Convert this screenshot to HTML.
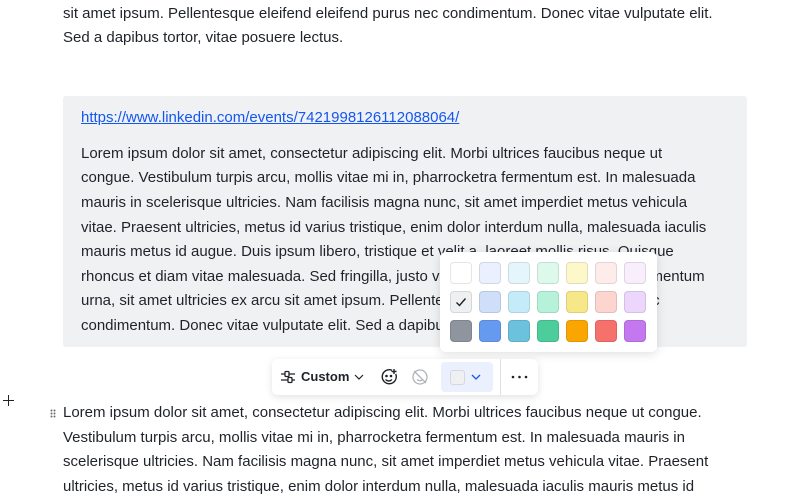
<!DOCTYPE html>
<html><head><meta charset="utf-8"><style>
*{margin:0;padding:0;box-sizing:border-box}
body{width:800px;height:488px;overflow:hidden;background:#fff;font-family:"Liberation Sans",sans-serif;font-size:15px;color:#1f2329;position:relative}
.l{position:absolute;left:63px;white-space:nowrap;line-height:20px}
.box{position:absolute;left:63px;top:96px;width:684px;height:251px;background:#f0f1f3;border-radius:3px}
a{color:#1456f0;text-decoration:underline}
.pop{position:absolute;left:440px;top:252px;width:217px;height:100px;background:#fff;border-radius:6px;box-shadow:0 2px 10px rgba(0,0,0,.13)}
.sw{position:absolute;width:22px;height:22px;border-radius:4px;border:1px solid rgba(0,0,0,.1)}
.tb{position:absolute;left:272px;top:359px;width:266px;height:36px;background:#fff;border-radius:6px;box-shadow:0 2px 8px rgba(0,0,0,.12)}
</style></head><body>
<div class="l" style="top:4px">sit amet ipsum. Pellentesque eleifend eleifend purus nec condimentum. Donec vitae vulputate elit.</div>
<div class="l" style="top:28px">Sed a dapibus tortor, vitae posuere lectus.</div>
<div class="box"></div>
<div class="l" style="left:81px;top:108px"><a>https://www.linkedin.com/events/7421998126112088064/</a></div>
<div class="l" style="left:81px;top:144px">Lorem ipsum dolor sit amet, consectetur adipiscing elit. Morbi ultrices faucibus neque ut</div>
<div class="l" style="left:81px;top:168px">congue. Vestibulum turpis arcu, mollis vitae mi in, pharrocketra fermentum est. In malesuada</div>
<div class="l" style="left:81px;top:193px">mauris in scelerisque ultricies. Nam facilisis magna nunc, sit amet imperdiet metus vehicula</div>
<div class="l" style="left:81px;top:218px">vitae. Praesent ultricies, metus id varius tristique, enim dolor interdum nulla, malesuada iaculis</div>
<div class="l" style="left:81px;top:242px">mauris metus id augue. Duis ipsum libero, tristique et velit a, laoreet mollis risus. Quisque</div>
<div class="l" style="left:81px;top:267px">rhoncus et diam vitae malesuada. Sed fringilla, justo vel fermentum volutpat, turpis fermentum</div>
<div class="l" style="left:81px;top:291px">urna, sit amet ultricies ex arcu sit amet ipsum. Pellentesque eleifend eleifend purus nec</div>
<div class="l" style="left:81px;top:316px">condimentum. Donec vitae vulputate elit. Sed a dapibus tortor, vitae posuere lectus.</div>

<div class="pop">
<div class="sw" style="left:10px;top:10px;background:#fff"></div>
<div class="sw" style="left:39px;top:10px;background:#eaf0fd"></div>
<div class="sw" style="left:68px;top:10px;background:#e4f6fb"></div>
<div class="sw" style="left:97px;top:10px;background:#dcf9ec"></div>
<div class="sw" style="left:126px;top:10px;background:#fdf8c9"></div>
<div class="sw" style="left:155px;top:10px;background:#feeceb"></div>
<div class="sw" style="left:184px;top:10px;background:#f8eefc"></div>
<div class="sw" style="left:10px;top:39px;background:#eff0f1"><svg width="20" height="20" style="position:absolute;left:0;top:0"><path d="M5.5 10.5l3 3 6-7" fill="none" stroke="#1f2329" stroke-width="1.4"/></svg></div>
<div class="sw" style="left:39px;top:39px;background:#cfdef9"></div>
<div class="sw" style="left:68px;top:39px;background:#c4ebf8"></div>
<div class="sw" style="left:97px;top:39px;background:#b6f1d9"></div>
<div class="sw" style="left:126px;top:39px;background:#f6e888"></div>
<div class="sw" style="left:155px;top:39px;background:#fdd5cf"></div>
<div class="sw" style="left:184px;top:39px;background:#ecd6fb"></div>
<div class="sw" style="left:10px;top:68px;background:#8f959e"></div>
<div class="sw" style="left:39px;top:68px;background:#669af0"></div>
<div class="sw" style="left:68px;top:68px;background:#6cc1dc"></div>
<div class="sw" style="left:97px;top:68px;background:#4ccd9b"></div>
<div class="sw" style="left:126px;top:68px;background:#fba600"></div>
<div class="sw" style="left:155px;top:68px;background:#f6716b"></div>
<div class="sw" style="left:184px;top:68px;background:#c478f0"></div>
</div>

<div class="tb">
<svg style="position:absolute;left:8px;top:10px" width="17" height="16" fill="none" stroke="#1f2329" stroke-width="1.3"><path d="M1 5h4M9 5h6M1 11h7M12 11h3"/><rect x="5" y="2.5" width="4" height="5" rx="1"/><rect x="8" y="8.5" width="4" height="5" rx="1"/></svg>
<div style="position:absolute;left:29px;top:10px;font-size:13px;font-weight:bold;color:#1f2329">Custom</div>
<svg style="position:absolute;left:82px;top:14px" width="10" height="8" fill="none" stroke="#1f2329" stroke-width="1.2"><path d="M1 2l4 4 4-4"/></svg>
<svg style="position:absolute;left:108px;top:9px" width="18" height="18" fill="none" stroke="#1f2329" stroke-width="1.4"><path d="M12 2.3A7 7 0 1 0 15.7 6"/><circle cx="6.5" cy="8" r=".6" fill="#1f2329"/><circle cx="11" cy="8" r=".6" fill="#1f2329"/><path d="M5.5 11.5q3.3 3 6.5 0M14 1v5M11.5 3.5h5"/></svg>
<svg style="position:absolute;left:139px;top:9px" width="18" height="18" fill="none" stroke="#b0b4ba" stroke-width="1.3"><circle cx="9" cy="9" r="7"/><path d="M3 3l12 12M6 11.5q3 2.5 6 0"/></svg>
<div style="position:absolute;left:169px;top:3px;width:52px;height:30px;background:#eaf0fd;border-radius:4px"></div>
<div style="position:absolute;left:178px;top:11px;width:15px;height:15px;background:#eff0f1;border:1px solid #d6d8db;border-radius:3px"></div>
<svg style="position:absolute;left:199px;top:15px" width="10" height="7" fill="none" stroke="#1456f0" stroke-width="1.3"><path d="M1 1l4 4 4-4"/></svg>
<div style="position:absolute;left:228px;top:0;width:1px;height:36px;background:#dee0e3"></div>
<svg style="position:absolute;left:239px;top:16px" width="18" height="4" fill="#1f2329"><circle cx="2" cy="2" r="1.3"/><circle cx="8.5" cy="2" r="1.3"/><circle cx="15" cy="2" r="1.3"/></svg>
</div>

<svg style="position:absolute;left:3px;top:395px" width="11" height="11" stroke="#1f2329" stroke-width="1"><path d="M5.5 0v11M0 5.5h11"/></svg>
<svg style="position:absolute;left:50px;top:409px" width="6" height="9" fill="#646a73"><circle cx="1.5" cy="1.5" r="1"/><circle cx="4.5" cy="1.5" r="1"/><circle cx="1.5" cy="4.5" r="1"/><circle cx="4.5" cy="4.5" r="1"/><circle cx="1.5" cy="7.5" r="1"/><circle cx="4.5" cy="7.5" r="1"/></svg>
<div class="l" style="top:403px">Lorem ipsum dolor sit amet, consectetur adipiscing elit. Morbi ultrices faucibus neque ut congue.</div>
<div class="l" style="top:428px">Vestibulum turpis arcu, mollis vitae mi in, pharrocketra fermentum est. In malesuada mauris in</div>
<div class="l" style="top:452px">scelerisque ultricies. Nam facilisis magna nunc, sit amet imperdiet metus vehicula vitae. Praesent</div>
<div class="l" style="top:477px">ultricies, metus id varius tristique, enim dolor interdum nulla, malesuada iaculis mauris metus id</div>
</body></html>
